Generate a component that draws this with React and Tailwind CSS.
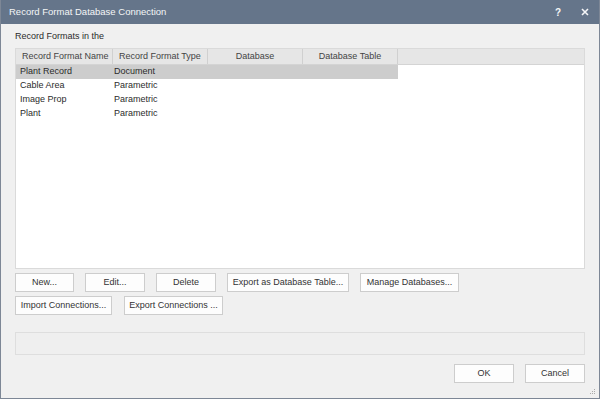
const columns = [
  { label: "Record Format Name", w: "w-[97px]" },
  { label: "Record Format Type", w: "w-[95px]" },
  { label: "Database", w: "w-[95px]" },
  { label: "Database Table", w: "w-[95px]" },
];

const rows = [
  { name: "Plant Record", type: "Document", selected: true },
  { name: "Cable Area", type: "Parametric" },
  { name: "Image Prop", type: "Parametric" },
  { name: "Plant", type: "Parametric" },
];

function Btn({ children, w }) {
  return (
    <button className={`${w} h-[19px] bg-[#fdfdfd] border border-[#cdcdcd] text-[#333] text-[9px] leading-none flex items-center justify-center`}>
      {children}
    </button>
  );
}

export default function App() {
  return (
    <div
      className="w-[600px] h-[399px] flex flex-col bg-[#f0f0f0] border border-[#7d8796] border-t-0 text-[9px] text-[#2b2b2b]"
      style={{ fontFamily: '"Liberation Sans", Arial, sans-serif' }}
    >
      <div className="h-[24px] bg-[#65758a] flex items-center pl-[8px] pr-[10px] text-[#f4f5f7] text-[9.5px] shrink-0">
        <span className="flex-1">Record Format Database Connection</span>
        <span className="font-bold text-[10px] mr-[20px]">?</span>
        <svg width="8" height="8" viewBox="0 0 8 8">
          <path d="M1 1L7 7M7 1L1 7" stroke="#f4f5f7" strokeWidth="1.6" />
        </svg>
      </div>

      <div className="flex flex-col flex-1 px-[14px]">
        <div className="mt-[7px] h-[11px] leading-[11px]">Record Formats in the</div>

        <div className="mt-[6px] h-[221px] bg-white border border-[#dadada] flex flex-col">
          <div className="h-[16px] bg-[#e6e6e6] border-b border-[#d4d4d4] flex shrink-0 text-[#444]">
            {columns.map((c, i) => (
              <div
                key={i}
                className={`${c.w} h-full flex items-center ${i < 2 ? "justify-start pl-[6px]" : "justify-center"} border-r border-[#d0d0d0]`}
              >
                {c.label}
              </div>
            ))}
            <div className="flex-1" />
          </div>
          {rows.map((r, i) => (
            <div key={i} className="flex h-[14px] items-center">
              <div className={`flex w-[382px] h-full items-center ${r.selected ? "bg-[#cdcdcd]" : ""}`}>
                <div className="w-[97px] pl-[4px]">{r.name}</div>
                <div className="w-[95px] pl-[1px]">{r.type}</div>
              </div>
            </div>
          ))}
        </div>

        <div className="mt-[4px] flex gap-[11px]">
          <Btn w="w-[59px]">New...</Btn>
          <Btn w="w-[60px]">Edit...</Btn>
          <Btn w="w-[60px]">Delete</Btn>
          <Btn w="w-[122px]">Export as Database Table...</Btn>
          <Btn w="w-[99px]">Manage Databases...</Btn>
        </div>
        <div className="mt-[4px] flex gap-[12px]">
          <Btn w="w-[97px]">Import Connections...</Btn>
          <Btn w="w-[99px]">Export Connections ...</Btn>
        </div>

        <div className="mt-[17px] h-[23px] bg-[#efefef] border border-[#dedede]" />

        <div className="mt-[9px] flex justify-end gap-[11px]">
          <Btn w="w-[60px]">OK</Btn>
          <Btn w="w-[60px]">Cancel</Btn>
        </div>
      </div>

      <div className="h-[14px] flex justify-end items-end pr-[3px] pb-[3px]">
        <svg width="6" height="6" viewBox="0 0 6 6">
          <rect x="4" y="0" width="1" height="1" fill="#aaa" />
          <rect x="2" y="2" width="1" height="1" fill="#aaa" />
          <rect x="4" y="2" width="1" height="1" fill="#aaa" />
          <rect x="0" y="4" width="1" height="1" fill="#aaa" />
          <rect x="2" y="4" width="1" height="1" fill="#aaa" />
          <rect x="4" y="4" width="1" height="1" fill="#aaa" />
        </svg>
      </div>
    </div>
  );
}
